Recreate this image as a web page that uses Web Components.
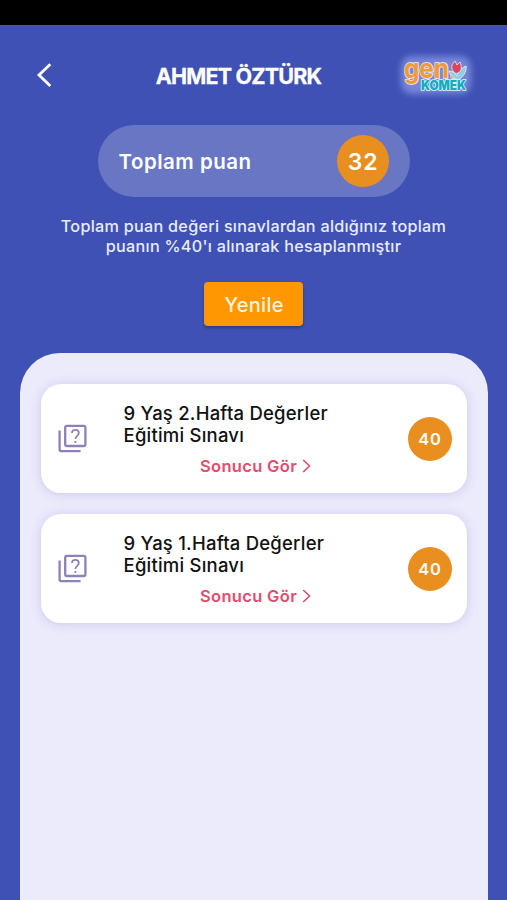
<!DOCTYPE html>
<html lang="tr">
<head>
<meta charset="utf-8">
<title>Toplam puan</title>
<style>
html, body { margin: 0; height: 100%; }
body { overflow: hidden; background: #3f51b5; font-family: Inter, "Liberation Sans", sans-serif; }
</style>
</head>
<body>
<score-screen></score-screen>
<script>
const define = (name, html) => {
  const template = document.createElement('template');
  template.innerHTML = html;
  customElements.define(name, class extends HTMLElement {
    constructor() {
      super();
      this.attachShadow({ mode: 'open' }).append(template.content.cloneNode(true));
    }
  });
};

define('gem-logo', `
<style>
  :host { display: block; width: 82px; height: 52px; }
  svg { display: block; overflow: visible; }
  text { font-family: Inter, "Liberation Sans", sans-serif; paint-order: stroke; stroke-linejoin: round; }
</style>
<svg width="82" height="52" viewBox="0 0 82 52">
  <defs><filter id="glow" x="-30%" y="-30%" width="160%" height="160%"><feGaussianBlur stdDeviation="3"/></filter></defs>
  <rect x="9" y="7" width="70" height="38" rx="11" fill="#7d8cdc" opacity=".9" filter="url(#glow)"/>
  <text x="12" y="29" font-size="27" font-weight="700" textLength="53" lengthAdjust="spacingAndGlyphs" fill="#f09a34" stroke="#e6deea" stroke-width="2">gen.</text>
  <path d="M64 31C62 27 58 27 57 22c4 0 6 2 8 5 1-5 3-7 9-10 1 6-3 11-8 14Z" fill="#8ccfe6" stroke="#e4e9f5" stroke-width=".9"/>
  <path d="M62 23c-4-4-2-8 1-11l2 4 3-3c2 5 2 9-2 11-2 1-3 0-4-1Z" fill="#d9465e" stroke="#f3dce4" stroke-width=".9"/>
  <text x="29" y="41" font-size="13" font-weight="900" textLength="45" lengthAdjust="spacingAndGlyphs" fill="#12adc0" stroke="#e5f5fa" stroke-width="1.6">KOMEK</text>
</svg>`);

define('app-header', `
<style>
  :host { display: grid; grid-template-columns: 88px 1fr 115px; align-items: center; height: 100px; padding: 0 17px 0 14px; box-sizing: border-box; color: #fff; }
  .back { padding-left: 22px; }
  svg { display: block; }
  h1 { margin: 0; text-align: center; font-size: 21.5px; line-height: 26px; font-weight: 700; letter-spacing: -.8px; white-space: nowrap; padding-top: 2px; -webkit-text-stroke: .3px #fff; }
  gem-logo { justify-self: center; }
</style>
<div class="back"><svg width="18" height="26" viewBox="0 0 18 26"><path d="M14.3 2.2 3 13l11.3 11" fill="none" stroke="#fff" stroke-width="2.8"/></svg></div>
<h1><slot></slot></h1>
<gem-logo></gem-logo>`);

define('score-badge', `
<style>
  :host { display: flex; align-items: center; justify-content: center; flex: none; box-sizing: border-box; width: 44px; height: 44px; border-radius: 50%; background: #e98f20; color: #fff; font-size: 16.5px; font-weight: 600; letter-spacing: .8px; padding: 1px 0 0 1px; }
  :host([large]) { width: 52px; height: 52px; font-size: 23px; letter-spacing: .8px; }
</style><slot></slot>`);

define('total-score', `
<style>
  :host { display: flex; align-items: center; justify-content: space-between; box-sizing: border-box; width: 312px; height: 72px; border-radius: 36px; padding: 0 21px; background: #6876c4; color: #fff; font-size: 20.5px; font-weight: 600; letter-spacing: .5px; }
</style><span><slot name="label"></slot></span><score-badge large><slot></slot></score-badge>`);

define('refresh-button', `
<style>
  :host { display: block; }
  button { display: block; width: 99px; height: 44px; border: 0; border-radius: 4px; padding: 1px 0 0 1px; background: #ff9800; color: #fff3de; font: 500 20px Inter, "Liberation Sans", sans-serif; letter-spacing: .3px; box-shadow: 0 2px 3px rgba(0,0,0,.28); }
</style><button type="button"><slot></slot></button>`);

define('exam-card', `
<style>
  :host { display: flex; align-items: center; box-sizing: border-box; height: 109px; padding: 0 15px 0 17px; border-radius: 20px; background: #fff; box-shadow: 0 1px 12px rgba(70,65,160,.2); color: #111; }
  .icon { flex: none; display: block; width: 30px; height: 30px; }
  .body { flex: 1; margin-left: 36px; display: flex; flex-direction: column; padding: 1px 20px 0 0; }
  .title { width: 230px; font-size: 18.5px; line-height: 22px; font-weight: 500; letter-spacing: .22px; }
  .link { display: flex; align-items: center; justify-content: center; gap: 5px; margin-top: 10px; height: 20px; color: #df4d70; font-size: 16.5px; font-weight: 600; letter-spacing: .33px; }
</style>
<svg class="icon" viewBox="0 0 30 30" fill="none" stroke="#8f80b8" stroke-width="2.3">
  <rect x="7.2" y="1.8" width="20.2" height="20.2" rx="1.8"/>
  <path d="M1.6 6.5v18.7q0 2 2 2h19"/>
  <path d="M14 9c0-4.2 6.8-4.2 6.8 0 0 2.9-3.4 2.8-3.4 6.1M17.4 17v2.1" stroke-width="1.8"/>
</svg>
<div class="body"><div class="title"><slot></slot></div>
<div class="link"><span>Sonucu Gör</span><svg width="9" height="14" viewBox="0 0 9 14"><path d="M1.2 1 7.5 7 1.2 13" fill="none" stroke="#df4d70" stroke-width="1.6"/></svg></div></div>
<score-badge><slot name="score"></slot></score-badge>`);

define('score-screen', `
<style>
  :host { display: flex; flex-direction: column; align-items: center; height: 100vh; background: #3f51b5; }
  .status { width: 100%; height: 25px; background: #000; flex: none; }
  app-header { width: 100%; flex: none; }
  total-score { flex: none; }
  p { margin: 20px 0 26px; flex: none; text-align: center; color: #e8ebff; font-size: 16.2px; line-height: 19.5px; font-weight: 450; letter-spacing: .27px; white-space: nowrap; }
  main { flex: 1; display: flex; flex-direction: column; gap: 21px; width: 468px; box-sizing: border-box; margin-top: 27px; padding: 31px 21px 0; border-radius: 40px 40px 0 0; background: #ecebfc; }
</style>
<div class="status"></div>
<app-header>AHMET ÖZTÜRK</app-header>
<total-score><span slot="label">Toplam puan</span>32</total-score>
<p>Toplam puan değeri sınavlardan aldığınız toplam<br>puanın %40'ı alınarak hesaplanmıştır</p>
<refresh-button>Yenile</refresh-button>
<main>
  <exam-card>9 Yaş 2.Hafta Değerler<br>Eğitimi Sınavı<span slot="score">40</span></exam-card>
  <exam-card>9 Yaş 1.Hafta Değerler<br>Eğitimi Sınavı<span slot="score">40</span></exam-card>
</main>`);
</script>
</body>
</html>
